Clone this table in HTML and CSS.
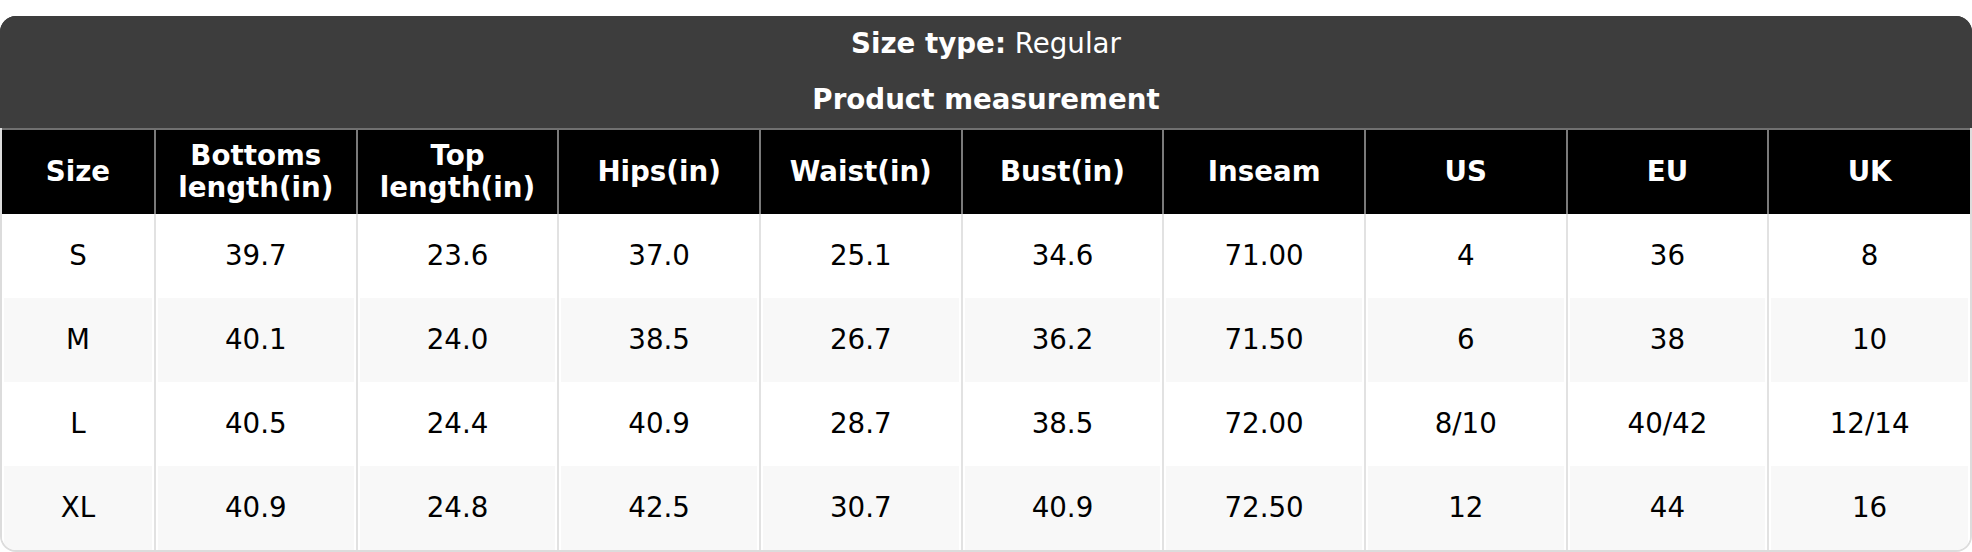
FILE: index.html
```html
<!DOCTYPE html>
<html lang="en">
<head>
<meta charset="utf-8">
<title>Size chart</title>
<link rel="stylesheet" href="styles.css">
</head>
<body>
<div class="chart">
  <div class="title">
    <div class="title-line"><strong>Size type:</strong> Regular</div>
    <div class="title-line"><strong>Product measurement</strong></div>
  </div>
  <div class="table-wrap">
    <table class="sizes">
      <colgroup>
        <col class="col-size">
        <col><col><col><col><col><col><col><col><col>
      </colgroup>
      <thead>
        <tr>
          <th>Size</th>
          <th>Bottoms<br>length(in)</th>
          <th>Top<br>length(in)</th>
          <th>Hips(in)</th>
          <th>Waist(in)</th>
          <th>Bust(in)</th>
          <th>Inseam</th>
          <th>US</th>
          <th>EU</th>
          <th>UK</th>
        </tr>
      </thead>
      <tbody>
        <tr>
          <td>S</td><td>39.7</td><td>23.6</td><td>37.0</td><td>25.1</td><td>34.6</td><td>71.00</td><td>4</td><td>36</td><td>8</td>
        </tr>
        <tr>
          <td>M</td><td>40.1</td><td>24.0</td><td>38.5</td><td>26.7</td><td>36.2</td><td>71.50</td><td>6</td><td>38</td><td>10</td>
        </tr>
        <tr>
          <td>L</td><td>40.5</td><td>24.4</td><td>40.9</td><td>28.7</td><td>38.5</td><td>72.00</td><td>8/10</td><td>40/42</td><td>12/14</td>
        </tr>
        <tr>
          <td>XL</td><td>40.9</td><td>24.8</td><td>42.5</td><td>30.7</td><td>40.9</td><td>72.50</td><td>12</td><td>44</td><td>16</td>
        </tr>
      </tbody>
    </table>
  </div>
</div>
</body>
</html>
```

FILE: styles.css
```css
html, body {
  margin: 0;
  padding: 0;
  background: #ffffff;
}

body {
  padding-top: 16px;
  font-family: "DejaVu Sans", "Liberation Sans", sans-serif;
  font-size: 27.7px;
  line-height: 32px;
  color: #000000;
}

.chart {
  border-radius: 16px;
  overflow: hidden;
  padding: 0 2px 2px;
  background: linear-gradient(to bottom, #3d3d3d 0, #3d3d3d 112px, #dcdcdc 112px);
}

.title {
  background: #3d3d3d;
  color: #ffffff;
  text-align: center;
  margin: 0 -2px;
}

.title-line {
  padding: 12px 0;
  font-weight: normal;
}

.title-line strong {
  font-weight: bold;
}

.table-wrap {
  background: #ffffff;
  border-radius: 0 0 14px 14px;
  overflow: hidden;
}

.sizes {
  width: 100%;
  table-layout: fixed;
  border-collapse: collapse;
}

.col-size {
  width: 153px;
}

.sizes th {
  background: #000000;
  color: #ffffff;
  font-weight: bold;
  padding: 10px 6px;
  border-top: 2px solid #707070;
  border-left: 2px solid #7a7a7a;
  text-align: center;
  vertical-align: middle;
}

.sizes th:first-child {
  border-left: 0;
}

.sizes td {
  padding: 26px 6px;
  text-align: center;
  vertical-align: middle;
  border-left: 2px solid #e2e2e2;
  color: #000000;
}

.sizes td:first-child {
  border-left: 0;
}

.sizes tbody tr:nth-child(even) td {
  background: #f8f8f8;
  box-shadow: inset 2px 0 #ffffff, inset -2px 0 #ffffff;
}
```
